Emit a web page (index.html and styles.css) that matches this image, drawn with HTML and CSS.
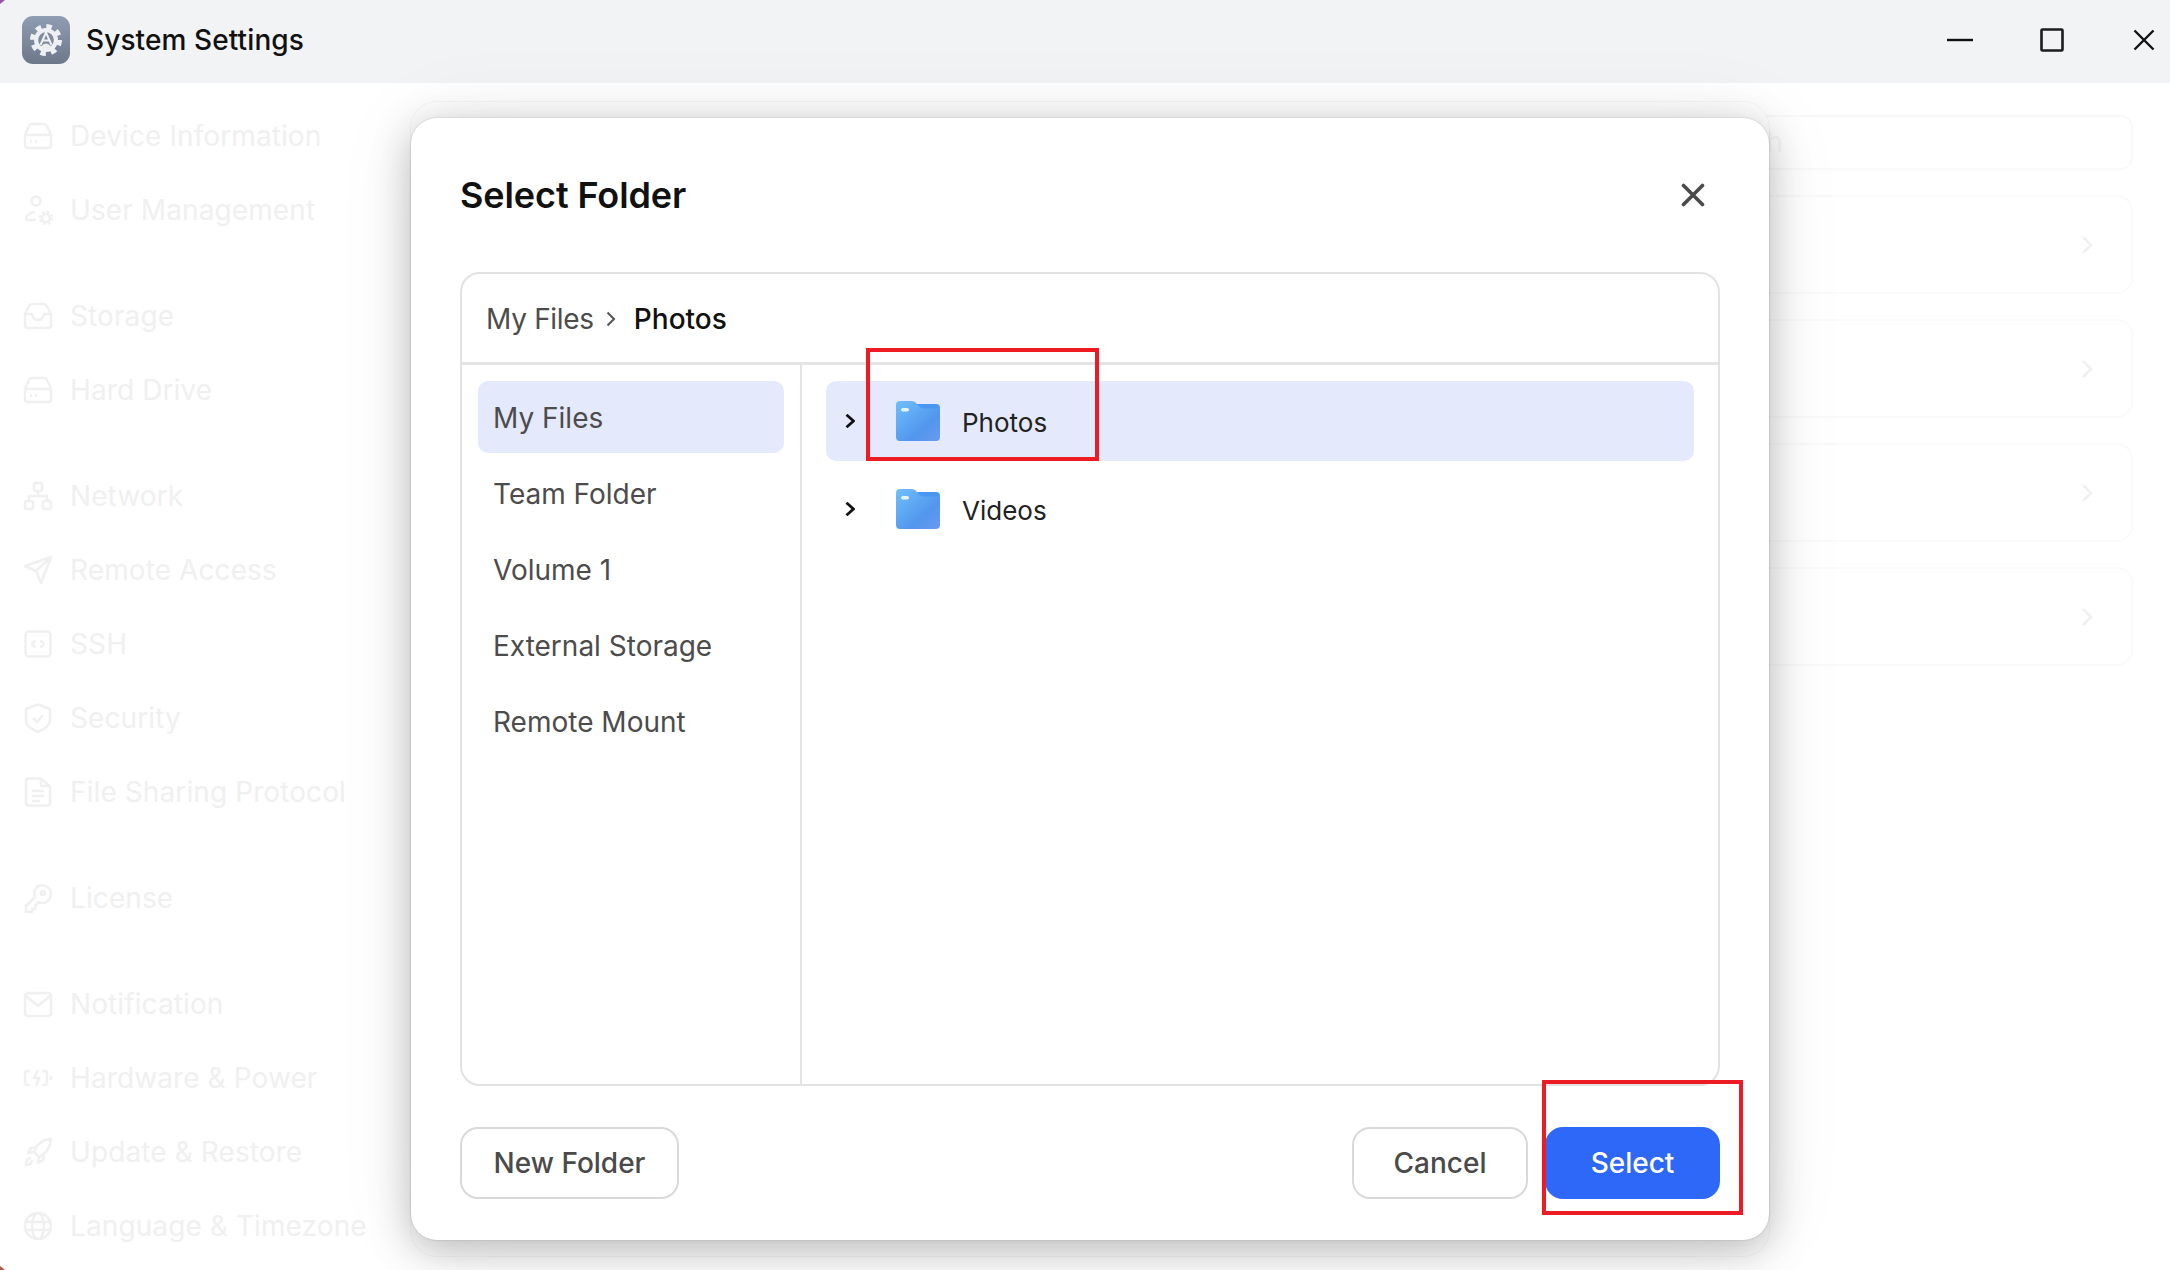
FILE: index.html
```html
<!DOCTYPE html>
<html>
<head>
  <meta charset="utf-8">
  <title>System Settings</title>
  <link rel="stylesheet" href="styles.css">
</head>
<body>
  <div class="window">
    <header class="titlebar">
      <svg class="app-icon" viewBox="0 0 48 48">
        <defs>
          <linearGradient id="appBg" x1="0" y1="0" x2="0" y2="1">
            <stop offset="0" stop-color="#8f9db3"/>
            <stop offset="1" stop-color="#6d7889"/>
          </linearGradient>
        </defs>
        <rect width="48" height="48" rx="11" fill="url(#appBg)"/>
        <circle cx="24" cy="24" r="13" fill="none" stroke="#eef0f3" stroke-width="6" stroke-dasharray="5.2 5"/>
        <circle cx="24" cy="24" r="12" fill="#eef0f3"/>
        <circle cx="24" cy="24" r="7.8" fill="#7f8b9e"/>
        <path d="M24 16.5 18.5 29M24 16.5 29.5 29M20 24.5h8" fill="none" stroke="#eef0f3" stroke-width="2"/>
        <path d="M19 30.5q5-6 10 0q-5 3-10 0z" fill="#eef0f3"/>
      </svg>
      <span class="app-title">System Settings</span>
      <div class="window-controls">
        <svg class="ctl" viewBox="0 0 28 28"><path d="M1 14h26" stroke="#111" stroke-width="2.4"/></svg>
        <svg class="ctl" viewBox="0 0 28 28"><rect x="3.5" y="3.5" width="21" height="21" rx="1" fill="none" stroke="#1c1c1c" stroke-width="2.6"/></svg>
        <svg class="ctl" viewBox="0 0 28 28"><path d="M4.500 4.500l19 19M23.500 4.500l-19 19" stroke="#111" stroke-width="2.4"/></svg>
      </div>
    </header>

    <div class="content">
      <nav class="sidebar">
        <div class="nav-group">
          <div class="nav-item"><svg class="nav-icon" viewBox="0 0 30 26"><path d="M2 12 6 3q1-2 3-2h12q2 0 3 2l4 9M2 12h26v10q0 3-3 3H5q-3 0-3-3z"/><path d="M7 18.500h2M12 18.500h2"/></svg>Device Information</div>
          <div class="nav-item"><svg class="nav-icon" viewBox="0 0 30 30"><circle cx="13" cy="6" r="4.500"/><path d="M3 25q0-7 9-8M3 25h10"/><circle cx="23" cy="23" r="4"/><circle cx="23" cy="23" r="6" stroke-dasharray="2.500 2.200"/></svg>User Management</div>
        </div>
        <div class="nav-group">
          <div class="nav-item"><svg class="nav-icon" viewBox="0 0 30 26"><path d="M2 11 6 3q1-2 3-2h12q2 0 3 2l4 8v11q0 3-3 3H5q-3 0-3-3z"/><path d="M2 11h7q1 6 6 6t6-6h7"/></svg>Storage</div>
          <div class="nav-item"><svg class="nav-icon" viewBox="0 0 30 26"><path d="M2 12 6 3q1-2 3-2h12q2 0 3 2l4 9M2 12h26v10q0 3-3 3H5q-3 0-3-3z"/><path d="M7 18.500h2M12 18.500h2"/></svg>Hard Drive</div>
        </div>
        <div class="nav-group">
          <div class="nav-item"><svg class="nav-icon" viewBox="0 0 30 30"><rect x="11" y="2" width="8" height="8" rx="2"/><rect x="2" y="20" width="8" height="8" rx="2"/><rect x="20" y="20" width="8" height="8" rx="2"/><path d="M15 10v5M6 20v-5h18v5"/></svg>Network</div>
          <div class="nav-item"><svg class="nav-icon" viewBox="0 0 30 30"><path d="M28 2 2 11l11 5 5 12zM13 16 28 2"/></svg>Remote Access</div>
          <div class="nav-item"><svg class="nav-icon" viewBox="0 0 30 30"><rect x="2.500" y="2.500" width="25" height="25" rx="3.500"/><path d="M12.500 11.500 9 15l3.500 3.500M17.500 11.500 21 15l-3.500 3.500"/></svg>SSH</div>
          <div class="nav-item"><svg class="nav-icon" viewBox="0 0 30 30"><path d="M15 1.500 27 6v11q0 7-12 12Q3 24 3 17V6z"/><path d="M10 15l4 4 6-7"/></svg>Security</div>
          <div class="nav-item"><svg class="nav-icon" viewBox="0 0 30 30"><path d="M5 1.500h13l9 8V26q0 2.500-2.500 2.500h-19Q3 28.500 3 26V4q0-2.500 2-2.500z"/><path d="M18 2v7h8M9 14h12M9 19h12M9 24h8"/></svg>File Sharing Protocol</div>
        </div>
        <div class="nav-group">
          <div class="nav-item"><svg class="nav-icon" viewBox="0 0 30 30"><path d="M19 2a9 9 0 0 1 0 18q-2 0-3.500-.7L12 23v3H9v3H3v-6l9-9q-.5-1.500-.5-3A8 8 0 0 1 19 2z"/><circle cx="20" cy="10" r="2"/></svg>License</div>
        </div>
        <div class="nav-group">
          <div class="nav-item"><svg class="nav-icon" viewBox="0 0 30 30"><rect x="2" y="4" width="26" height="23" rx="3"/><path d="M3 7l12 10L27 7"/></svg>Notification</div>
          <div class="nav-item"><svg class="nav-icon" viewBox="0 0 30 30"><path d="M7 8H4.500Q2 8 2 10.500v9Q2 22 4.500 22H7M19 8h2.500Q24 8 24 10.500v9q0 2.500-2.500 2.500H19M15 7l-4 8h5l-3 8M28 13v4"/></svg>Hardware &amp; Power</div>
          <div class="nav-item"><svg class="nav-icon" viewBox="0 0 30 30"><path d="M28 2q-13 1-17 13l5 5q11-5 12-18zM11 15l-6 1 3-5 5-1M16 20l-1 6 5-3 1-5"/><path d="M8 21q-5 0-5 7 6 0 6-5"/></svg>Update &amp; Restore</div>
          <div class="nav-item"><svg class="nav-icon" viewBox="0 0 30 30"><circle cx="15" cy="15" r="13"/><ellipse cx="15" cy="15" rx="6" ry="13"/><path d="M2 11h26M2 19h26"/></svg>Language &amp; Timezone</div>
        </div>
      </nav>

      <main class="main">
        <div class="search-box">Search</div>
        <div class="card"><svg class="card-arrow" viewBox="0 0 12 18"><path d="M2 1l8 8-8 8"/></svg></div>
        <div class="card"><svg class="card-arrow" viewBox="0 0 12 18"><path d="M2 1l8 8-8 8"/></svg></div>
        <div class="card"><svg class="card-arrow" viewBox="0 0 12 18"><path d="M2 1l8 8-8 8"/></svg></div>
        <div class="card"><svg class="card-arrow" viewBox="0 0 12 18"><path d="M2 1l8 8-8 8"/></svg></div>
      </main>
    </div>

    <div class="dialog-back"></div>
    <section class="dialog">
      <div class="dialog-head">
        <h2 class="dialog-title">Select Folder</h2>
        <svg class="dialog-close" viewBox="0 0 24 24"><path d="M2.500 2.500l19 19M21.500 2.500l-19 19" stroke="#4a4a4a" stroke-width="3.600" stroke-linecap="round"/></svg>
      </div>

      <div class="picker">
        <div class="breadcrumb">
          <span class="crumb">My Files</span>
          <svg class="crumb-arrow" viewBox="0 0 10 16"><path d="M1.500 1.500 8 8l-6.500 6.500"/></svg>
          <span class="crumb-current">Photos</span>
        </div>
        <div class="picker-body">
          <ul class="locations">
            <li class="location active">My Files</li>
            <li class="location">Team Folder</li>
            <li class="location">Volume 1</li>
            <li class="location">External Storage</li>
            <li class="location">Remote Mount</li>
          </ul>
          <div class="tree">
            <div class="tree-row active">
              <svg class="tree-arrow" viewBox="0 0 10 14"><path d="M1.500.8 8.500 7l-7 6.200"/></svg>
              <svg class="folder" viewBox="0 0 44 40">
                <defs>
                  <linearGradient id="folderFront" x1="0" y1="0" x2="1" y2="1">
                    <stop offset="0" stop-color="#70c0fb"/>
                    <stop offset="0.650" stop-color="#5296ee"/>
                    <stop offset="1" stop-color="#6a9aee"/>
                  </linearGradient>
                </defs>
                <path d="M20 3h20q4 0 4 4v8H20z" fill="#4a97f1"/>
                <path d="M4 0h12q2 0 3.500 1.500L24 6q1.500 1.500 3.500 1.500H44V36q0 4-4 4H4q-4 0-4-4V4q0-4 4-4z" fill="url(#folderFront)"/>
                <rect x="5" y="7" width="8" height="3.600" rx="1.800" fill="#e4f3ff"/>
              </svg>
              <span class="tree-name">Photos</span>
            </div>
            <div class="tree-row">
              <svg class="tree-arrow" viewBox="0 0 10 14"><path d="M1.500.8 8.500 7l-7 6.200"/></svg>
              <svg class="folder" viewBox="0 0 44 40">
                <path d="M20 3h20q4 0 4 4v8H20z" fill="#4a97f1"/>
                <path d="M4 0h12q2 0 3.500 1.500L24 6q1.500 1.500 3.500 1.500H44V36q0 4-4 4H4q-4 0-4-4V4q0-4 4-4z" fill="url(#folderFront)"/>
                <rect x="5" y="7" width="8" height="3.600" rx="1.800" fill="#e4f3ff"/>
              </svg>
              <span class="tree-name">Videos</span>
            </div>
          </div>
        </div>
      </div>

      <div class="dialog-foot">
        <button class="btn">New Folder</button>
        <div class="foot-right">
          <button class="btn btn-cancel">Cancel</button>
          <button class="btn btn-primary">Select</button>
        </div>
      </div>
    </section>

    <div class="mark mark-folder"></div>
    <div class="mark mark-select"></div>
    <div class="corner corner-top"></div>
    <div class="corner corner-bottom"></div>
  </div>
</body>
</html>
```

FILE: styles.css
```css
* {
  box-sizing: border-box;
}

html,
body {
  margin: 0;
  height: 100%;
  overflow: hidden;
}

body {
  font-family: Inter, "Noto Sans", "Liberation Sans", sans-serif;
  background-color: #fff;
}

.window {
  position: relative;
  width: 2170px;
  height: 1270px;
  overflow: hidden;
  background-color: #fff;
}

.titlebar {
  display: flex;
  align-items: center;
  height: 83px;
  padding: 0 12px 4px 22px;
  background-color: #f2f3f5;
}

.app-icon {
  width: 48px;
  height: 48px;
}

.app-title {
  margin-left: 16px;
  font-size: 28px;
  font-weight: 500;
  letter-spacing: 0.1px;
  color: #111;
}

.window-controls {
  display: flex;
  gap: 64px;
  margin-left: auto;
}

.ctl {
  width: 28px;
  height: 28px;
}

.content {
  display: flex;
  height: 1187px;
}

.sidebar {
  flex: 0 0 500px;
  padding: 16px 0 0 23px;
}

.nav-group {
  margin-bottom: 32px;
}

.nav-item {
  display: flex;
  align-items: center;
  height: 74px;
  font-size: 28px;
  letter-spacing: 0.1px;
  color: #f0f0f0;
  white-space: nowrap;
}

.nav-icon {
  flex: none;
  width: 30px;
  height: 30px;
  margin-right: 17px;
  fill: none;
  stroke: #f0f0f0;
  stroke-width: 2.600;
  stroke-linejoin: round;
}

.main {
  flex: 1;
  padding: 32px 37px 0 0;
}

.search-box {
  height: 55px;
  padding-right: 348px;
  margin-bottom: 25px;
  border: 2px solid #f9f9f9;
  border-radius: 12px;
  font-size: 28px;
  line-height: 50px;
  text-align: right;
  color: #f7f7f7;
}

.card {
  display: flex;
  align-items: center;
  justify-content: flex-end;
  height: 99px;
  padding-right: 38px;
  margin-bottom: 25px;
  border: 2px solid #fafafa;
  border-radius: 16px;
}

.card-arrow {
  width: 12px;
  height: 18px;
  fill: none;
  stroke: #f0f0f0;
  stroke-width: 2.500;
}

.dialog-back {
  position: absolute;
  left: 411px;
  top: 102px;
  width: 1358px;
  height: 1154px;
  border-radius: 26px;
  background-color: #fff;
  box-shadow: 0 0 0 1px rgba(0, 0, 0, 0.03);
}

.dialog {
  position: absolute;
  left: 411px;
  top: 118px;
  width: 1358px;
  height: 1122px;
  padding: 0 49px 41px 49px;
  border-radius: 26px;
  background-color: #fff;
  box-shadow: 0 0 2px rgba(0, 0, 0, 0.2), 0 10px 40px rgba(0, 0, 0, 0.25), 0 0 90px rgba(0, 0, 0, 0.06);
}

.dialog-head {
  display: flex;
  align-items: center;
  justify-content: space-between;
  height: 154px;
  padding-right: 15px;
}

.dialog-title {
  margin: 0;
  font-size: 36px;
  font-weight: 600;
  letter-spacing: -0.1px;
  color: #111;
}

.dialog-close {
  width: 24px;
  height: 24px;
}

.picker {
  display: flex;
  flex-direction: column;
  height: 814px;
  border: 2px solid #e2e2e2;
  border-radius: 20px;
}

.breadcrumb {
  display: flex;
  align-items: center;
  flex: 0 0 91px;
  padding: 1px 0 0 24px;
  border-bottom: 3px solid #e4e4e4;
  font-size: 28px;
}

.crumb {
  letter-spacing: -0.3px;
  color: #4c4c4c;
}

.crumb-arrow {
  width: 10px;
  height: 16px;
  margin: 0 18px 0 12px;
  fill: none;
  stroke: #555;
  stroke-width: 2;
}

.crumb-current {
  font-weight: 500;
  color: #111;
}

.picker-body {
  display: flex;
  flex: 1;
}

.locations {
  flex: 0 0 340px;
  margin: 0;
  padding: 16px 16px 0 16px;
  list-style: none;
  border-right: 2px solid #e4e4e4;
}

.location {
  height: 72px;
  margin-bottom: 4px;
  padding: 1px 0 0 15px;
  border-radius: 10px;
  font-size: 28px;
  line-height: 72px;
  color: #4c4c4c;
}

.location.active {
  background-color: #e4eafc;
}

.tree {
  flex: 1;
  padding: 16px 24px 0 24px;
}

.tree-row {
  display: flex;
  align-items: center;
  height: 80px;
  margin-bottom: 8px;
  padding-left: 19px;
  border-radius: 10px;
}

.tree-row.active {
  background-color: #e4eafc;
}

.tree-arrow {
  width: 10px;
  height: 14px;
  fill: none;
  stroke: #111;
  stroke-width: 2.800;
}

.folder {
  width: 44px;
  height: 40px;
  margin-left: 41px;
}

.tree-name {
  margin-left: 22px;
  padding-top: 2px;
  font-size: 26px;
  color: #222;
}

.dialog-foot {
  display: flex;
  justify-content: space-between;
  margin-top: 41px;
}

.foot-right {
  display: flex;
  gap: 17px;
}

.btn {
  height: 72px;
  width: 219px;
  padding: 0;
  border: 2px solid #d9d9d9;
  border-radius: 18px;
  background-color: #fff;
  font-family: inherit;
  font-size: 28px;
  font-weight: 500;
  color: #4a4a4a;
}

.btn-cancel {
  width: 176px;
}

.btn-primary {
  width: 175px;
  border: none;
  background-color: #2e68f8;
  color: #fff;
}

.mark {
  position: absolute;
  border: 4px solid #ed1c24;
}

.mark-folder {
  left: 866px;
  top: 348px;
  width: 233px;
  height: 113px;
}

.mark-select {
  left: 1542px;
  top: 1080px;
  width: 201px;
  height: 135px;
}

.corner {
  position: absolute;
  left: 0;
  width: 5px;
  height: 4px;
}

.corner-top {
  top: 0;
  background-color: #9b4fa8;
  clip-path: polygon(0 0, 100% 0, 0 100%);
}

.corner-bottom {
  bottom: 0;
  background-color: #b5533a;
  clip-path: polygon(0 0, 100% 100%, 0 100%);
}
```
